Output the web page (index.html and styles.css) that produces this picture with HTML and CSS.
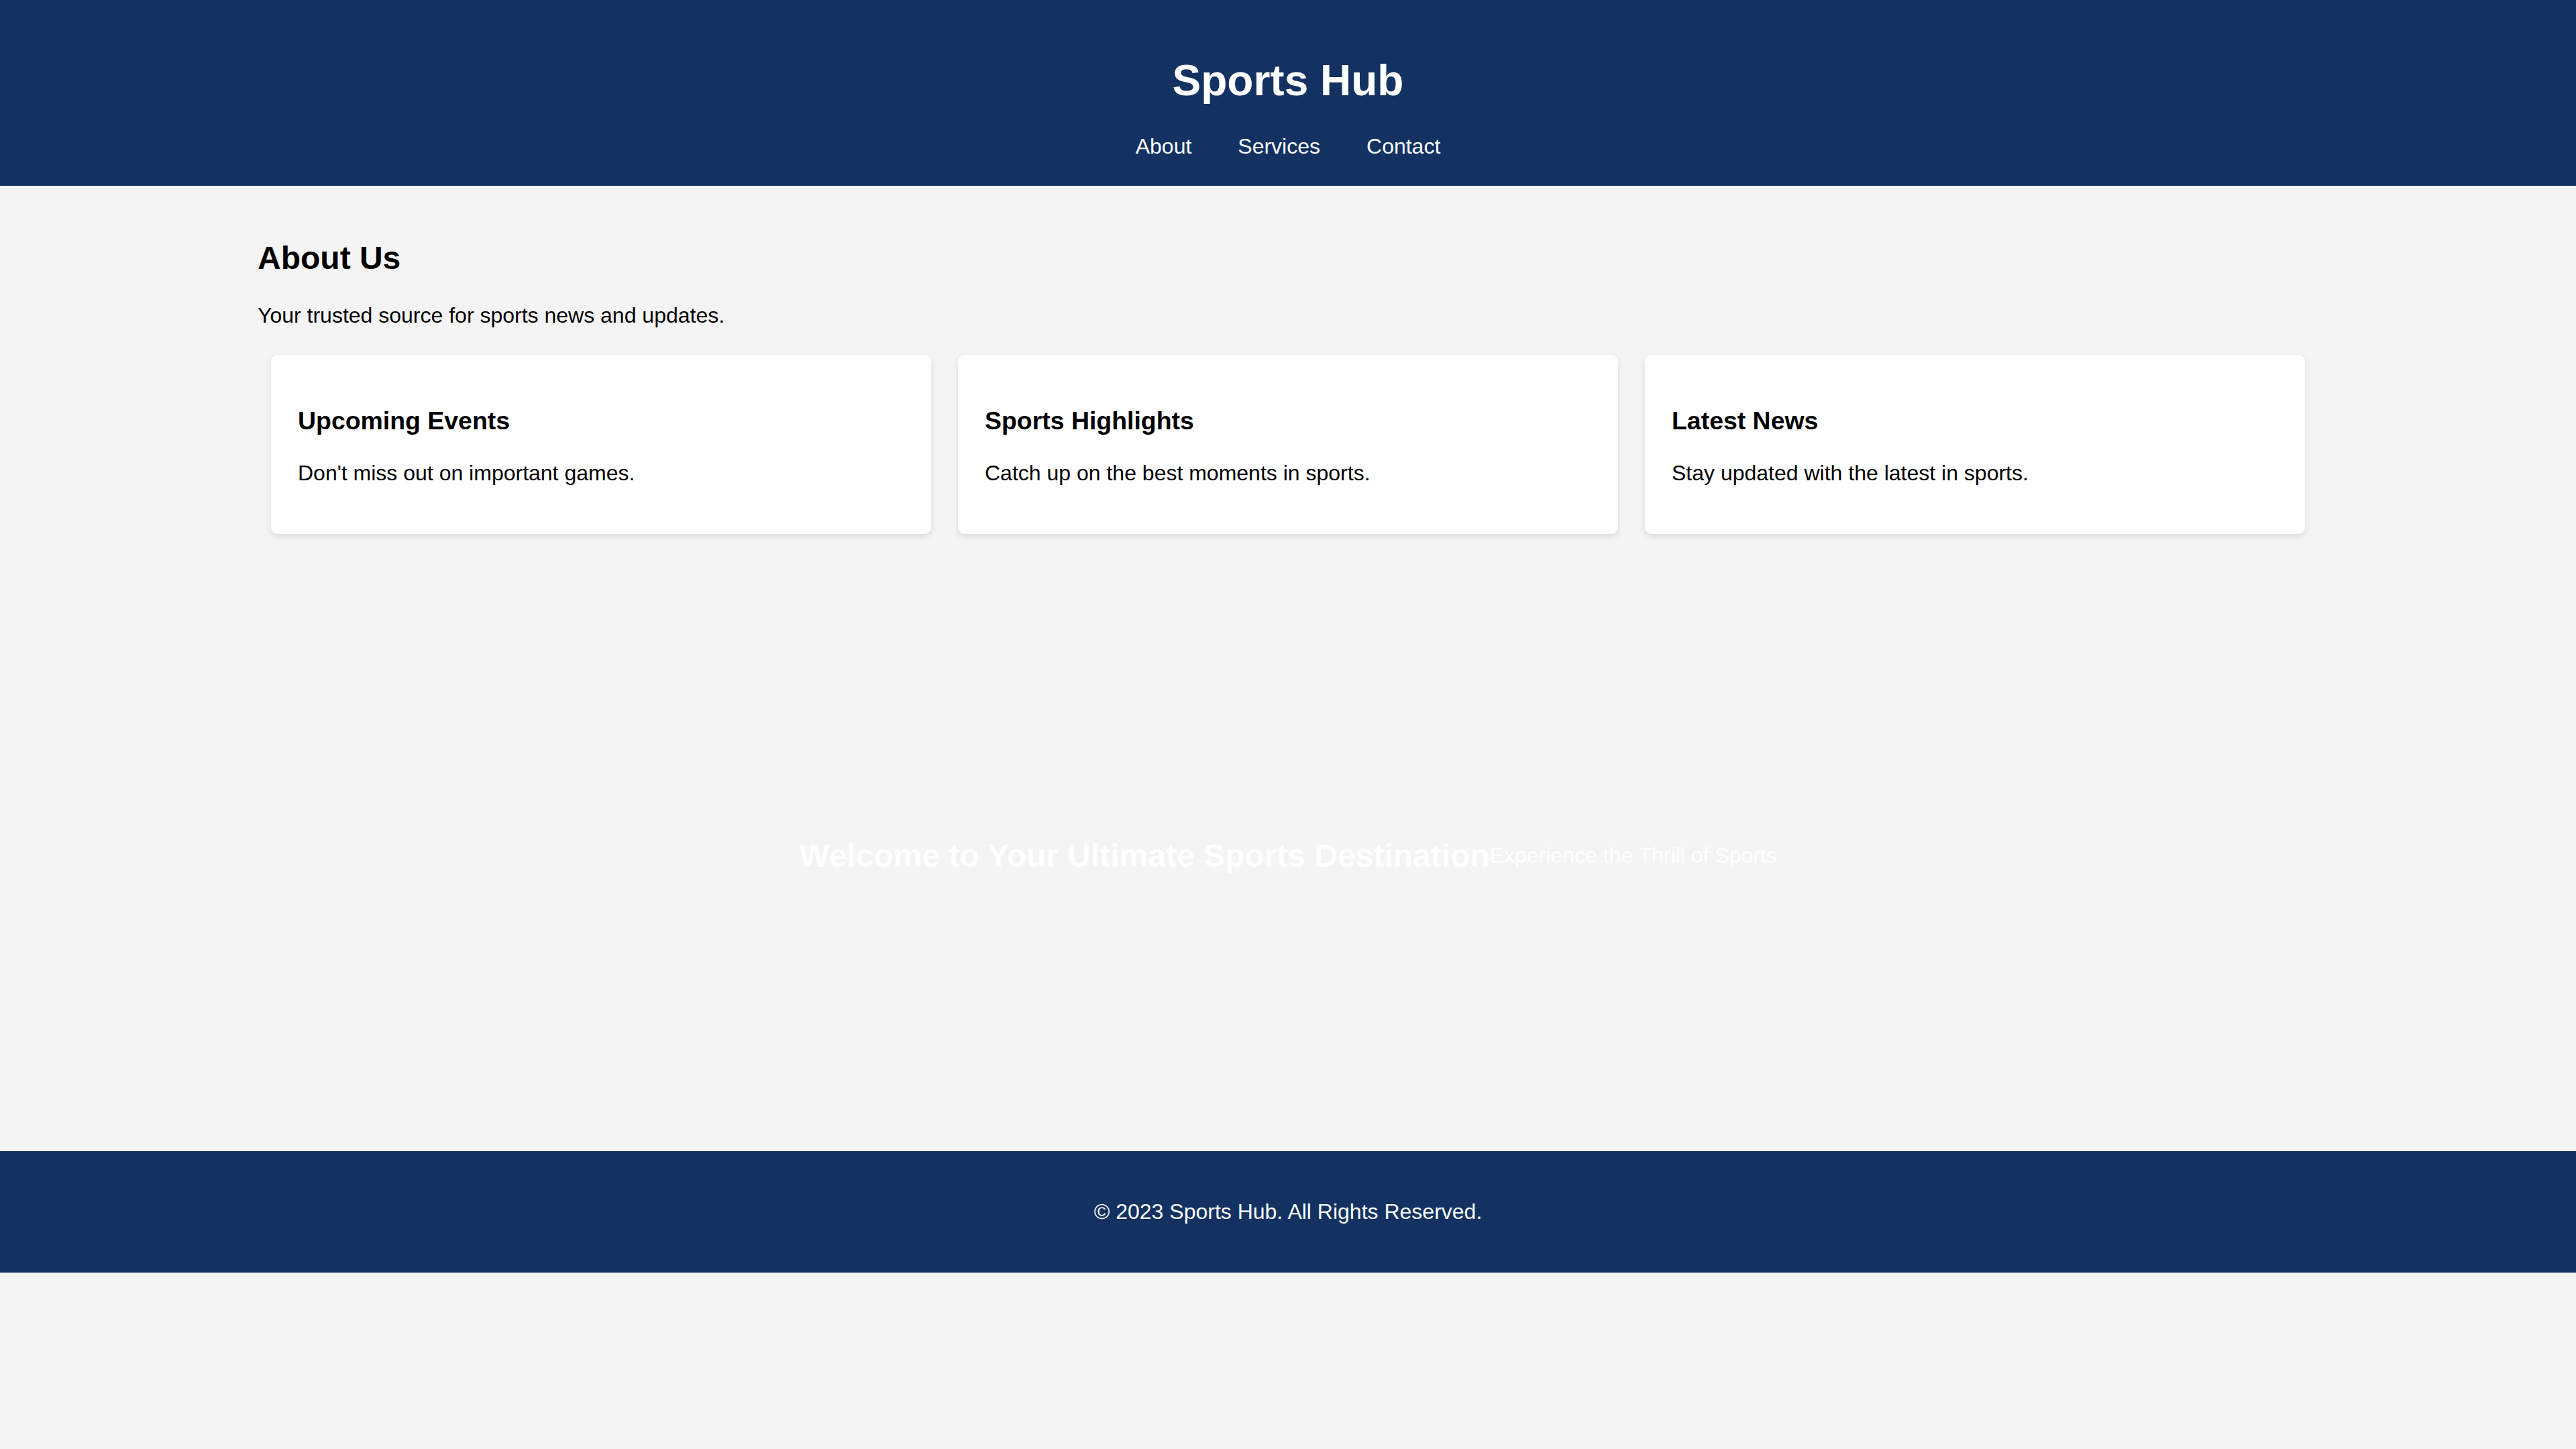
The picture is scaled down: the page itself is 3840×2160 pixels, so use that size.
FILE: index.html
```html
<!DOCTYPE html>
<html lang="en">
<head>
<meta charset="utf-8">
<title>Sports Hub</title>
<link rel="stylesheet" href="styles.css">
</head>
<body>
<header class="site-header">
  <h1 class="brand">Sports Hub</h1>
  <nav class="nav">
    <a href="#about">About</a>
    <a href="#services">Services</a>
    <a href="#contact">Contact</a>
  </nav>
</header>
<main class="content" id="about">
  <h2 class="section-title">About Us</h2>
  <p class="intro">Your trusted source for sports news and updates.</p>
  <div class="cards" id="services">
    <div class="card">
      <h3>Upcoming Events</h3>
      <p>Don't miss out on important games.</p>
    </div>
    <div class="card">
      <h3>Sports Highlights</h3>
      <p>Catch up on the best moments in sports.</p>
    </div>
    <div class="card">
      <h3>Latest News</h3>
      <p>Stay updated with the latest in sports.</p>
    </div>
  </div>
</main>
<section class="hero">
  <h2 class="hero-title">Welcome to Your Ultimate Sports Destination</h2>
  <p class="hero-sub">Experience the Thrill of Sports</p>
</section>
<footer class="site-footer" id="contact">
  <p>&copy; 2023 Sports Hub. All Rights Reserved.</p>
</footer>
</body>
</html>
```
FILE: styles.css
```css
html, body {
  margin: 0;
  padding: 0;
}
body {
  background: #f4f4f4;
  color: #000;
  font-family: "Liberation Sans", Arial, sans-serif;
  font-size: 32px;
  line-height: normal;
}
.site-header {
  background: #133262;
  color: #fff;
  text-align: center;
  padding: 40px 0;
}
.brand {
  font-size: 64px;
  font-weight: bold;
  margin: 43px 0;
}
.nav {
  display: flex;
  justify-content: center;
  gap: 69px;
  font-size: 32px;
}
.nav a {
  color: #fff;
  text-decoration: none;
}
.content {
  width: 80%;
  margin: 0 auto;
  padding: 40px 0;
}
.section-title {
  font-size: 48px;
  font-weight: bold;
  margin: 40px 0;
}
.intro {
  margin: 0 0 40px;
}
.cards {
  display: flex;
  gap: 40px;
  padding: 0 20px;
}
.card {
  flex: 1;
  background: #fff;
  padding: 40px;
  border-radius: 10px;
  box-shadow: 0 4px 10px rgba(0, 0, 0, 0.1);
}
.card h3 {
  font-size: 37.44px;
  font-weight: bold;
  margin: 37.44px 0;
}
.card p {
  margin: 32px 0;
}
.hero {
  height: 800px;
  padding: 40px;
  display: flex;
  justify-content: center;
  align-items: center;
  color: #fff;
  background: #f4f4f4;
}
.hero-title {
  font-size: 48px;
  font-weight: bold;
  margin: 40px 0;
}
.hero-sub {
  margin: 32px 0;
}
.site-footer {
  background: #133262;
  color: #fff;
  text-align: center;
  padding: 40px;
}
.site-footer p {
  margin: 32px 0;
}
```
